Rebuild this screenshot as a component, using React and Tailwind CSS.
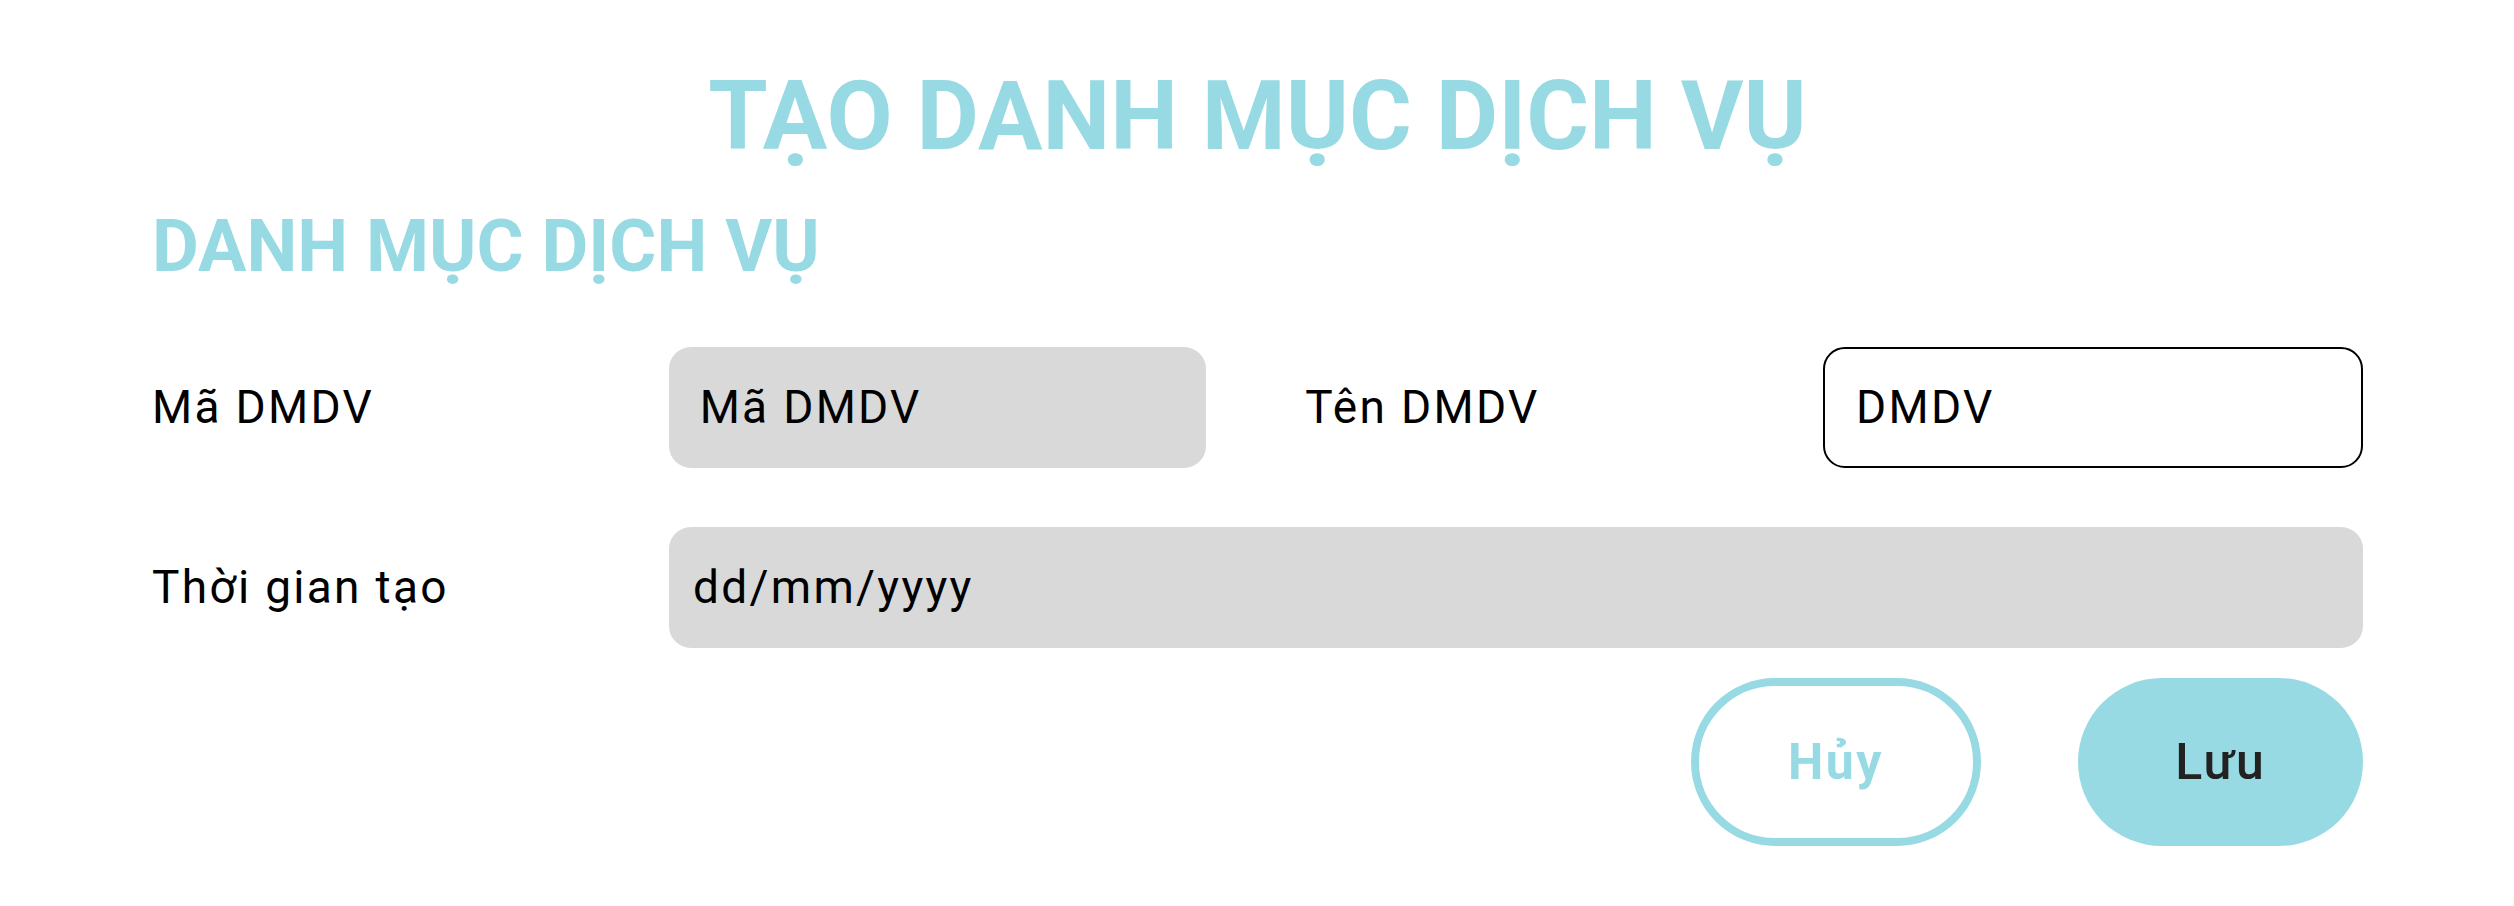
import { useState } from 'react';

const font = { fontFamily: 'Roboto, "Noto Sans", sans-serif' };

function Label({ children, className = '' }) {
  return (
    <div className={`flex items-center text-[46px] tracking-[0.05em] text-black ${className}`}>
      {children}
    </div>
  );
}

export default function App() {
  const [ten, setTen] = useState('DMDV');

  return (
    <div className="min-h-[906px] w-full bg-white pl-[152px] pr-[151px] pt-[68px]" style={font}>
      {/* tiêu đề */}
      <h1 className="text-center text-[96px] leading-none font-bold text-[#98dae3]">TẠO DANH MỤC DỊCH VỤ</h1>
      <h2 className="mt-[47px] text-[72px] leading-none font-bold text-[#98dae3]">DANH MỤC DỊCH VỤ</h2>

      {/* hàng 1 */}
      <div className="mt-[64px] flex h-[121px]">
        <Label className="w-[517px]">Mã DMDV</Label>
        <div className="flex w-[538px] items-center rounded-[22px] bg-[#d9d9d9] px-[31px] text-[46px] tracking-[0.05em] text-black">
          Mã DMDV
        </div>
        <Label className="ml-[99px] w-[518px]">Tên DMDV</Label>
        <input
          value={ten}
          onChange={(e) => setTen(e.target.value)}
          className="w-[540px] rounded-[22px] border-2 border-black bg-white px-[31px] text-[46px] tracking-[0.05em] text-black outline-none"
        />
      </div>

      {/* hàng 2 */}
      <div className="mt-[59px] flex h-[121px]">
        <Label className="w-[517px]">Thời gian tạo</Label>
        <div className="flex flex-1 items-center rounded-[22px] bg-[#d9d9d9] px-[24px] text-[46px] tracking-[0.05em] text-black">
          dd/mm/yyyy
        </div>
      </div>

      {/* nút */}
      <div className="mt-[30px] flex justify-end gap-[97px]">
        <button className="flex h-[168px] w-[290px] items-center justify-center rounded-full border-[8px] border-[#98dae3] bg-white text-[50px] tracking-[0.05em] font-bold text-[#98dae3]">
          Hủy
        </button>
        <button className="flex h-[168px] w-[285px] items-center justify-center rounded-full bg-[#98dae3] text-[50px] tracking-[0.04em] font-medium text-[#222]">
          Lưu
        </button>
      </div>
    </div>
  );
}
